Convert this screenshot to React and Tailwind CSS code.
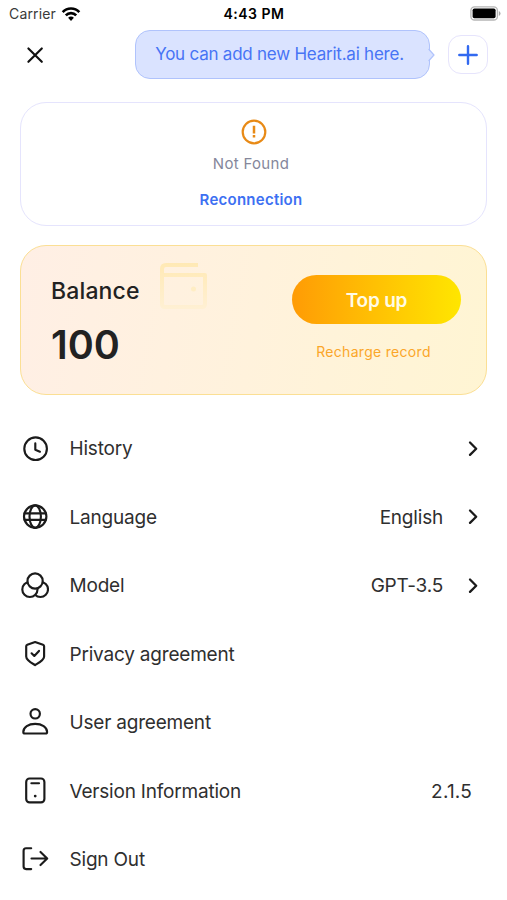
import { clsx } from 'clsx'

function Icon({ children, className }) {
    return (
        <svg viewBox="0 0 28 28" fill="none" stroke="currentColor" strokeWidth="2.15" strokeLinecap="round" strokeLinejoin="round" className={clsx('w-7 h-7 shrink-0 text-[#1b1b1b]', className)}>
            {children}
        </svg>
    )
}

const icons = {
    history: (
        <>
            <circle cx="14.6" cy="13.7" r="11.3" />
            <path d="M14.3 8.4v6.3l4.6 2" />
        </>
    ),
    language: (
        <>
            <circle cx="14.2" cy="13.6" r="11.2" />
            <ellipse cx="14.2" cy="13.6" rx="5.7" ry="11.2" />
            <path d="M3.5 10.4h21.4M3.5 16.8h21.4" />
        </>
    ),
    model: (
        <>
            <circle cx="19.4" cy="17.4" r="7.6" />
            <circle cx="8.9" cy="17.4" r="7.6" fill="white" />
            <circle cx="14.1" cy="9" r="7.6" fill="white" />
        </>
    ),
    privacy: (
        <>
            <path d="M14.1 2 22 4.7q1.1.4 1.1 1.5v10.2c0 3.7-4.8 6.1-9 8.7-4.2-2.6-8.9-5-8.9-8.7V6.2q0-1.1 1.1-1.5z" />
            <path d="m10.6 13.3 2.7 2.6 4.7-5" />
        </>
    ),
    user: (
        <>
            <circle cx="14.2" cy="5.8" r="4.7" />
            <path d="M2.3 24c0-5 5.2-8.2 11.9-8.2S26.1 19 26.1 24q0 1.5-1.5 1.5H3.8q-1.5 0-1.5-1.5z" />
        </>
    ),
    version: (
        <>
            <rect x="5.2" y="1.5" width="18.2" height="23.9" rx="3.4" />
            <path d="M10.4 6.2h7.6" />
            <circle cx="14.2" cy="19.1" r="1.4" fill="currentColor" stroke="none" />
        </>
    ),
    signOut: (
        <>
            <path d="M10.2 3.2H5.1q-2.5 0-2.5 2.5v15.9q0 2.5 2.5 2.5h5.1" />
            <path d="M10.5 13.5h15.6M19.5 7l6.7 6.5-6.7 6.5" />
        </>
    ),
}

const rows = [
    { icon: 'history', label: 'History', link: true },
    { icon: 'language', label: 'Language', value: 'English', link: true },
    { icon: 'model', label: 'Model', value: 'GPT-3.5', link: true },
    { icon: 'privacy', label: 'Privacy agreement' },
    { icon: 'user', label: 'User agreement' },
    { icon: 'version', label: 'Version Information', value: '2.1.5' },
    { icon: 'signOut', label: 'Sign Out' },
]

function StatusBar() {
    return (
        <div className="grid grid-cols-3 items-center h-[27px] pl-[9px] pr-[6px] text-black">
            <div className="flex items-center gap-[5px] text-[14px] tracking-[0.15px] text-[#3a3a3a]">
                Carrier
                <svg viewBox="0 0 20 16" className="w-5 h-4 text-black" fill="none" stroke="currentColor" strokeWidth="2.6">
                    <path d="M1.7 6.2C6.2 1.2 13.8 1.2 18.3 6.2" />
                    <path d="M4.8 9.4c2.8-3.1 7.6-3.1 10.4 0" />
                    <path d="M7.1 11.8c1.6-1.7 4.2-1.7 5.8 0L10 15z" fill="currentColor" stroke="none" />
                </svg>
            </div>
            <div className="-ml-[2px] text-center text-[14px] tracking-[0.5px] font-semibold whitespace-nowrap">4:43 PM</div>
            <svg viewBox="0 0 31 15" className="w-[31px] h-[15px] justify-self-end">
                <rect x="0.9" y="0.8" width="26.5" height="13.2" rx="3.6" fill="white" stroke="#b5b5b5" strokeWidth="1.3" />
                <rect x="2.6" y="2.5" width="23" height="9.8" rx="1.8" fill="black" />
                <path d="M28.8 5v5q1.7-.8 1.7-2.5T28.8 5z" fill="#a8a8a8" />
            </svg>
        </div>
    )
}

function Header() {
    return (
        <div className="flex items-center mt-[3px] pl-[21px] pr-[19px] h-[49px]">
            <Icon className="text-[#111]">
                <path d="m7.4 7.4 13.4 13.4M20.8 7.4 7.4 20.8" />
            </Icon>
            <div className="relative ml-auto flex items-center justify-center w-[295px] h-[49px] rounded-[15px] border-[1.5px] border-[#b0c3fc] bg-[#dae3ff] text-[17px] tracking-[-0.23px] text-[#4774f5]">
                <span className="whitespace-nowrap -ml-[6px]">You can add new Hearit.ai here.</span>
                <svg viewBox="0 0 7 14" className="absolute -right-[6px] top-[17px] w-[7px] h-[14px]">
                    <path d="M0 1 6 7 0 13z" fill="#dae3ff" />
                    <path d="M.6 1 6 7 .6 13" fill="none" stroke="#b0c3fc" strokeWidth="1.2" />
                </svg>
            </div>
            <button className="ml-[18px] flex items-center justify-center w-10 h-[39px] rounded-[13px] border-[1.5px] border-[#e6e4fc] text-[#3269f0]">
                <svg viewBox="0 0 20 20" className="w-5 h-5" stroke="currentColor" strokeWidth="2.4" strokeLinecap="round">
                    <path d="M10 1.3v17.4M1.3 10h17.4" />
                </svg>
            </button>
        </div>
    )
}

function ConnectionCard() {
    return (
        <div className="mt-[22.5px] mx-5 h-[124px] rounded-[26px] border-[1.5px] border-[#e5e4fd] flex flex-col items-center">
            <svg viewBox="0 0 26 26" className="mt-4 w-[26px] h-[26px]" fill="none" stroke="#e88a16" strokeWidth="2.2">
                <circle cx="13" cy="13" r="11.3" />
                <path d="M13 6.8v7.6M13 16.1v2.3" strokeWidth="2.5" />
            </svg>
            <div className="mt-[7px] -ml-[5px] text-[15px] tracking-[0.3px] leading-6 text-[#85879b]">Not Found</div>
            <button className="mt-3 -ml-[5px] text-[15px] tracking-[0.25px] leading-6 font-semibold text-[#3d70f2]">Reconnection</button>
        </div>
    )
}

function BalanceCard() {
    return (
        <div className="mt-[19.5px] mx-5 h-[150px] rounded-[26px] border-[1.5px] border-[#fbdf94] bg-linear-100 from-[#ffefe5] to-[#fff5d3] flex justify-between pl-[30px] pr-[25px]">
            <div>
                <div className="flex">
                    <div className="mt-[29px] w-[89px] whitespace-nowrap text-[23px] tracking-[0.15px] leading-8 font-medium text-[#222]">Balance</div>
                    <svg viewBox="0 0 48 48" className="ml-[19px] mt-4 w-12 h-12" fill="none" strokeWidth="4" strokeLinejoin="round">
                        <defs>
                            <linearGradient id="wallet" gradientUnits="userSpaceOnUse" x1="0" y1="0" x2="0" y2="48">
                                <stop stopColor="#ffe9b4" />
                                <stop offset="1" stopColor="#fff0d4" />
                            </linearGradient>
                        </defs>
                        <g stroke="url(#wallet)">
                            <path d="M39 3H7Q3 3 3 7v7" />
                            <path d="M3 13h43v29q0 3-3 3H6q-3 0-3-3z" />
                        </g>
                        <circle cx="34.5" cy="27" r="2.5" fill="#ffedc4" />
                    </svg>
                </div>
                <div className="mt-[11px] text-[39.5px] leading-[48px] font-semibold text-[#222]">100</div>
            </div>
            <div className="flex flex-col items-center pt-[29px]">
                <button className="w-[169px] h-[49px] pt-[3px] rounded-full bg-linear-to-r from-[#ff9b05] to-[#ffe600] text-[19px] tracking-[-0.2px] font-semibold text-[#fffbe6]">Top up</button>
                <button className="mt-[16px] -ml-[6px] text-[14px] tracking-[0.3px] leading-6 text-[#fba629]">Recharge record</button>
            </div>
        </div>
    )
}

function MenuRow({ icon, label, value, link }) {
    return (
        <div className="flex items-center h-[68.45px] pl-[21px] pr-7">
            <Icon>{icons[icon]}</Icon>
            <span className="ml-[20.5px] pt-[2px] text-[19px] tracking-[-0.2px]">{label}</span>
            {value && <span className={clsx('ml-auto pt-[2px] text-[19px]', link ? 'tracking-[-0.2px]' : 'mr-[7px] tracking-[0.2px]')}>{value}</span>}
            {link && (
                <svg viewBox="0 0 12 18" className={clsx('w-3 h-[18px] text-[#1b1b1b]', value ? 'ml-6' : 'ml-auto')} fill="none" stroke="currentColor" strokeWidth="2.3" strokeLinecap="round" strokeLinejoin="round">
                    <path d="m3 2.5 6.2 6.2L3 14.9" />
                </svg>
            )}
        </div>
    )
}

export default function App() {
    return (
        <div className="w-[507px] h-[900px] overflow-hidden bg-white font-['Inter',sans-serif] text-[#2f2f2f]">
            <StatusBar />
            <Header />
            <ConnectionCard />
            <BalanceCard />
            <div className="mt-[19.5px]">
                {rows.map((row) => (
                    <MenuRow key={row.icon} {...row} />
                ))}
            </div>
        </div>
    )
}
